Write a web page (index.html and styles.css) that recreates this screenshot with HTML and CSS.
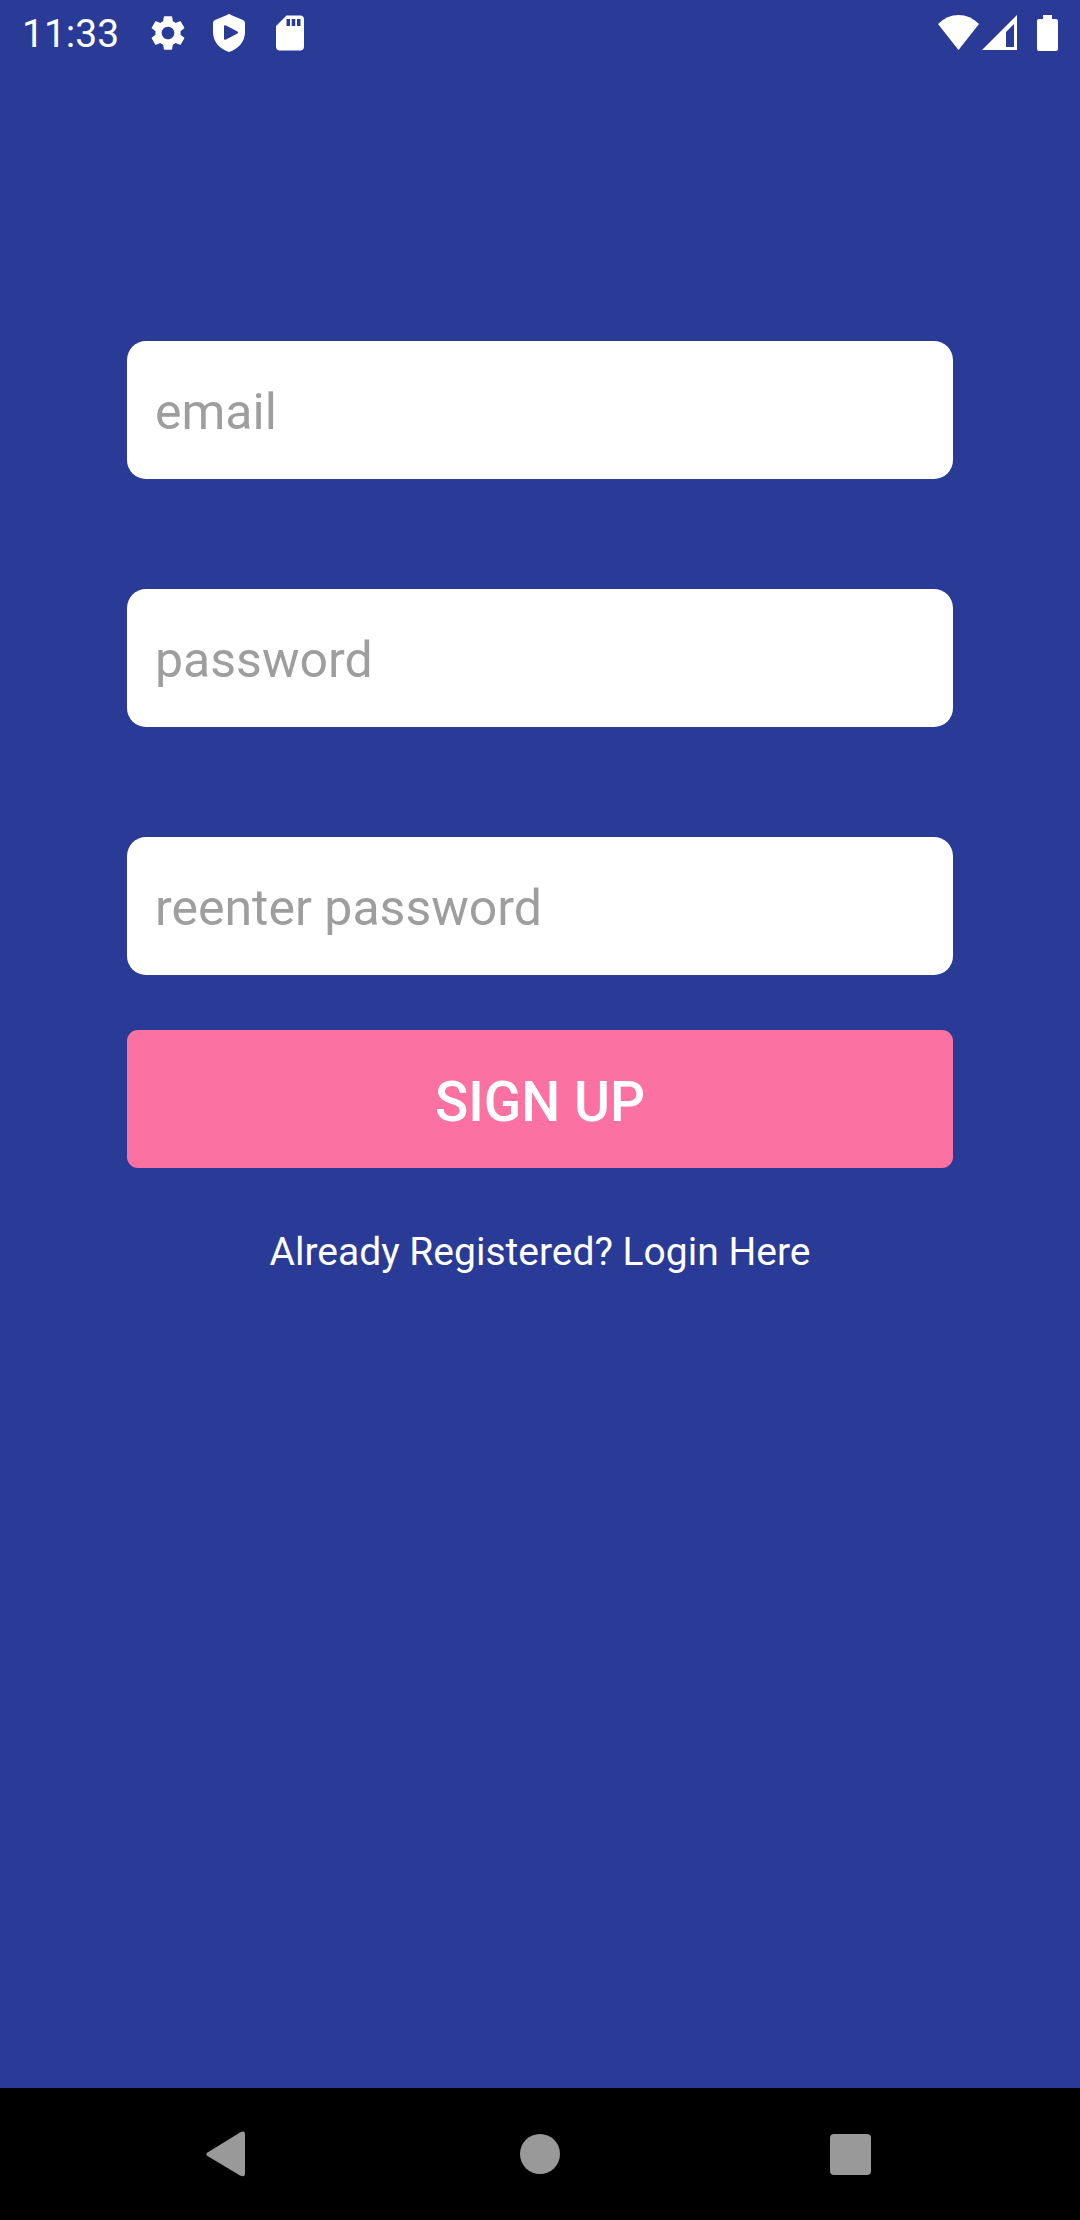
FILE: index.html
```html
<!DOCTYPE html>
<html lang="en">
<head>
<meta charset="utf-8">
<meta name="viewport" content="width=device-width, initial-scale=1">
<title>Sign up</title>
<link rel="stylesheet" href="styles.css">
</head>
<body>
<header class="status-bar">
  <time class="clock">11:33</time>
  <div class="notifications">
    <svg class="notification-icon" viewBox="0 0 24 24" aria-hidden="true"><path d="M19.14 12.94c.04-.3.06-.61.06-.94 0-.32-.02-.64-.07-.94l2.03-1.58c.18-.14.23-.41.12-.61l-1.92-3.32c-.12-.22-.37-.29-.59-.22l-2.39.96c-.5-.38-1.03-.7-1.62-.94l-.36-2.54c-.04-.24-.24-.41-.48-.41h-3.84c-.24 0-.43.17-.47.41l-.36 2.54c-.59.24-1.13.57-1.62.94l-2.39-.96c-.22-.08-.47 0-.59.22L2.74 8.87c-.12.21-.08.47.12.61l2.03 1.58c-.05.3-.09.63-.09.94s.02.64.07.94l-2.03 1.58c-.18.14-.23.41-.12.61l1.92 3.32c.12.22.37.29.59.22l2.39-.96c.5.38 1.03.7 1.62.94l.36 2.54c.05.24.24.41.48.41h3.84c.24 0 .44-.17.47-.41l.36-2.54c.59-.24 1.13-.56 1.62-.94l2.39.96c.22.08.47 0 .59-.22l1.92-3.32c.12-.22.07-.47-.12-.61l-2.01-1.58zM12 15.6c-1.98 0-3.6-1.62-3.6-3.6s1.62-3.6 3.6-3.6 3.6 1.62 3.6 3.6-1.62 3.6-3.6 3.6z"/></svg>
    <svg class="notification-icon" viewBox="0 0 42 42" aria-hidden="true"><path fill-rule="evenodd" d="M21 2Q22 2 23 3L35 8Q37 9 37 11V20C37 30 30 37 21 40C12 37 5 30 5 20V11Q5 9 7 8L19 3Q20 2 21 2ZM16 14.500V26.500Q16 28.500 18 27.500L29.500 21.500Q30.500 20.500 29.500 19.500L18 13.500Q16 12.500 16 14.500Z"/></svg>
    <svg class="notification-icon" viewBox="0 0 24 24" aria-hidden="true"><path d="M18 2h-8L4 8v12c0 1.100.9 2 2 2h12c1.100 0 2-.9 2-2V4c0-1.100-.9-2-2-2zm-6 6h-2V4h2v4zm3 0h-2V4h2v4zm3 0h-2V4h2v4z"/></svg>
  </div>
  <div class="system-icons">
    <svg class="wifi-icon" viewBox="0 0 41 36" aria-hidden="true"><path d="M0 9Q9 0 20.500 0T41 9L20.500 35Z"/></svg>
    <svg class="signal-icon" viewBox="0 0 35 36" aria-hidden="true"><path fill-rule="evenodd" d="M0 35L35 0V35ZM24 17V32H32V9Z"/></svg>
    <svg class="battery-icon" viewBox="0 0 21 36" aria-hidden="true"><path d="M6 0H15V4H19Q21 4 21 6V34Q21 36 19 36H2Q0 36 0 34V6Q0 4 2 4H6Z"/></svg>
  </div>
</header>
<main class="screen">
  <form class="signup-form">
    <input class="field" type="email" placeholder="email" aria-label="email">
    <input class="field" type="password" placeholder="password" aria-label="password">
    <input class="field" type="password" placeholder="reenter password" aria-label="reenter password">
    <button class="submit" type="submit">SIGN UP</button>
    <a class="login-link" href="#login">Already Registered? Login Here</a>
  </form>
</main>
<nav class="nav-bar" aria-label="System">
  <button class="nav-button" type="button" aria-label="Back"><svg class="nav-icon" viewBox="0 0 48 48" aria-hidden="true"><path d="M3.500 22.500L36 2.500Q41 0 41 4V43Q41 48 36 45.500L3.500 26Q1 24.500 3.500 22.500Z"/></svg></button>
  <button class="nav-button" type="button" aria-label="Home"><svg class="nav-icon" viewBox="0 0 48 48" aria-hidden="true"><circle cx="24" cy="24" r="20"/></svg></button>
  <button class="nav-button" type="button" aria-label="Overview"><svg class="nav-icon" viewBox="0 0 48 48" aria-hidden="true"><rect x="2" y="4" width="41" height="41" rx="4"/></svg></button>
</nav>
</body>
</html>
```
FILE: styles.css
```css
* {
  box-sizing: border-box;
}

body {
  margin: 0;
  min-height: 100vh;
  display: flex;
  flex-direction: column;
  background: #2a3a97;
  color: #fff;
  font-family: Roboto, "Liberation Sans", sans-serif;
}

svg {
  display: block;
  fill: currentColor;
}

.status-bar {
  display: flex;
  align-items: center;
  height: 66px;
  padding: 0 22px;
}

.clock {
  padding-top: 2px;
  font-size: 39px;
  line-height: 48px;
}

.notifications {
  display: flex;
  gap: 19px;
  margin-left: 28px;
}

.notification-icon {
  width: 42px;
  height: 42px;
}

.system-icons {
  display: flex;
  margin-left: auto;
}

.wifi-icon {
  width: 41px;
  height: 36px;
}

.signal-icon {
  width: 35px;
  height: 36px;
  margin-left: 3px;
}

.battery-icon {
  width: 21px;
  height: 36px;
  margin-left: 20px;
}

.screen {
  flex: 1;
  padding: 275px 127px 0;
}

.signup-form {
  display: flex;
  flex-direction: column;
}

.field {
  width: 100%;
  height: 138px;
  margin: 0 0 110px;
  padding: 4px 28px 0;
  border: 0;
  border-radius: 19px;
  background: #fff;
  color: #222;
  font: 400 50px/60px Roboto, "Liberation Sans", sans-serif;
}

.field::placeholder {
  color: #9e9e9e;
  opacity: 1;
}

.field:nth-of-type(3) {
  margin-bottom: 55px;
}

.submit {
  height: 138px;
  padding: 6px 0 0;
  border: 0;
  border-radius: 11px;
  background: #fb71a2;
  color: #fff;
  font: 500 55px/64px Roboto, "Liberation Sans", sans-serif;
}

.login-link {
  align-self: center;
  margin-top: 60px;
  color: #fff;
  font-size: 39px;
  line-height: 48px;
  text-decoration: none;
}

.nav-bar {
  display: grid;
  grid-template-columns: repeat(3, 1fr);
  height: 132px;
  padding: 0 72px;
  background: #000;
}

.nav-button {
  display: flex;
  align-items: center;
  justify-content: center;
  padding: 0;
  border: 0;
  background: none;
  color: #999;
}

.nav-icon {
  width: 48px;
  height: 48px;
}
```
